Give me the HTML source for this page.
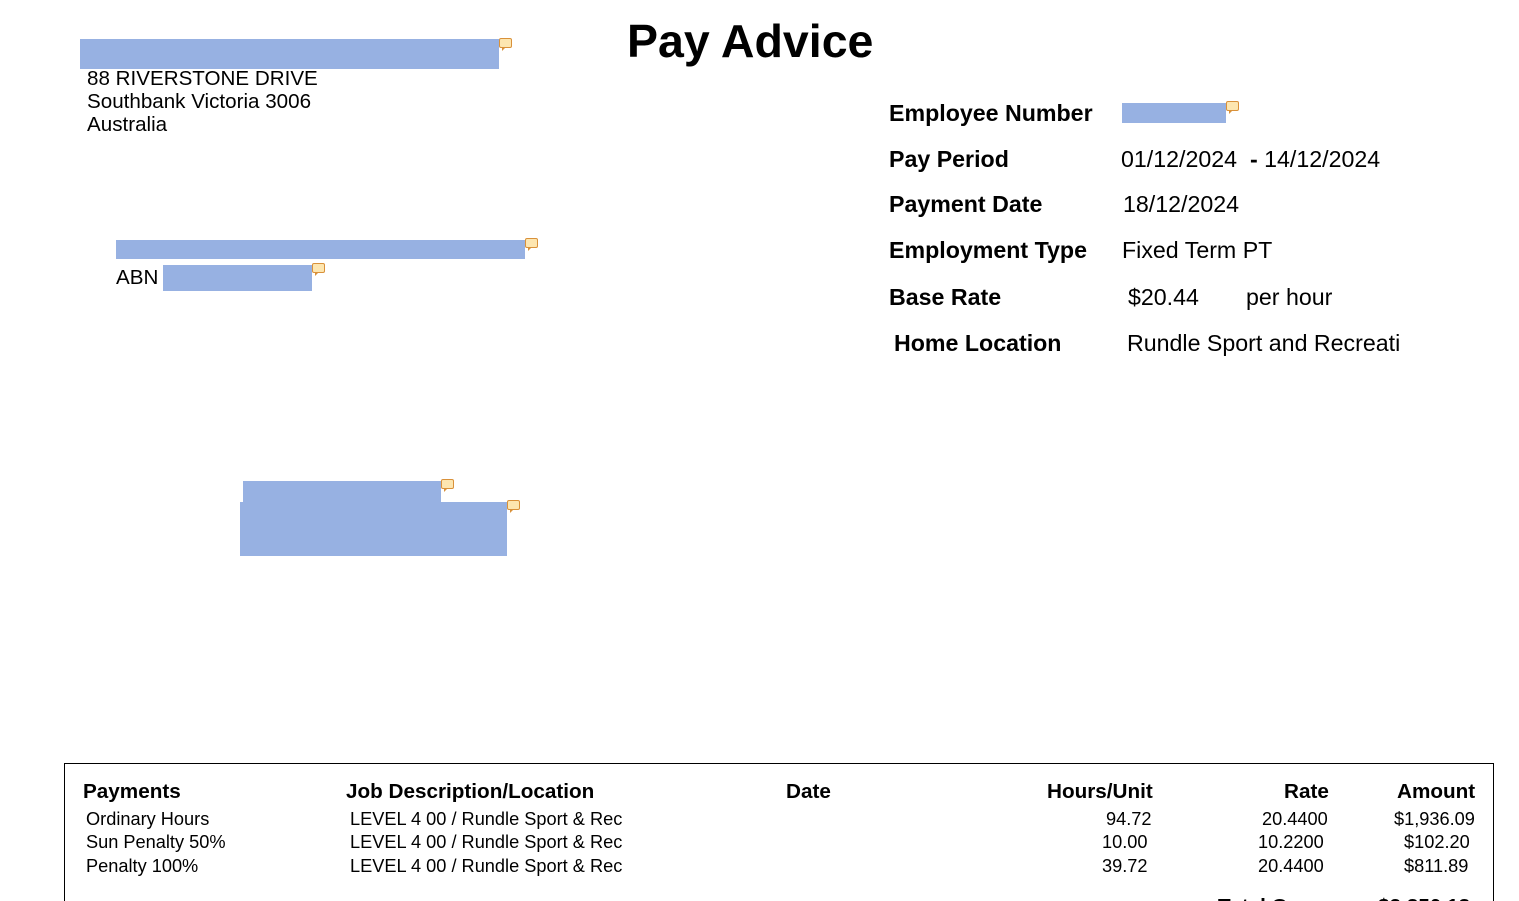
<!DOCTYPE html>
<html><head><meta charset="utf-8"><style>
html,body{margin:0;width:1519px;height:901px;overflow:hidden}
body{background:#fff;font-family:"Liberation Sans",Arial,sans-serif;color:#000;position:relative}
.a{position:absolute;white-space:nowrap}
.r{position:absolute;background:#97b1e2}
.n{position:absolute;width:11px;height:8px;background:#fde6b0;border:1px solid #d9913a;border-radius:2px}
.n:after{content:"";position:absolute;left:2px;bottom:-4px;border-left:3px solid #d9913a;border-bottom:3px solid transparent}
.lb{font-weight:bold;font-size:23.2px}
.v{font-size:23.2px}
.ad{font-size:20.6px}
.th{font-weight:bold;font-size:20.7px}
.td{font-size:18.2px}
</style></head><body>
<div class="a" style="left:627px;top:14px;font-size:46.5px;font-weight:bold">Pay Advice</div>

<div class="r" style="left:80px;top:39px;width:419px;height:30px"></div><div class="n" style="left:499px;top:38px"></div>
<div class="a ad" style="left:87px;top:67px">88 RIVERSTONE DRIVE</div>
<div class="a ad" style="left:87px;top:90px">Southbank Victoria 3006</div>
<div class="a ad" style="left:87px;top:113px">Australia</div>

<div class="r" style="left:116px;top:240px;width:409px;height:19px"></div><div class="n" style="left:525px;top:238px"></div>
<div class="a ad" style="left:116px;top:266px">ABN</div>
<div class="r" style="left:163px;top:265px;width:149px;height:26px"></div><div class="n" style="left:312px;top:263px"></div>

<div class="r" style="left:243px;top:481px;width:198px;height:22px"></div><div class="n" style="left:441px;top:479px"></div>
<div class="r" style="left:240px;top:502px;width:267px;height:54px"></div><div class="n" style="left:507px;top:500px"></div>

<div class="a lb" style="left:889px;top:100px">Employee Number</div>
<div class="r" style="left:1122px;top:103px;width:104px;height:20px"></div><div class="n" style="left:1226px;top:101px"></div>
<div class="a lb" style="left:889px;top:146px">Pay Period</div>
<div class="a v" style="left:1121px;top:146px">01/12/2024 &nbsp;<b>-</b> 14/12/2024</div>
<div class="a lb" style="left:889px;top:191px">Payment Date</div>
<div class="a v" style="left:1123px;top:191px">18/12/2024</div>
<div class="a lb" style="left:889px;top:237px">Employment Type</div>
<div class="a v" style="left:1122px;top:237px">Fixed Term PT</div>
<div class="a lb" style="left:889px;top:284px">Base Rate</div>
<div class="a v" style="left:1128px;top:284px">$20.44</div>
<div class="a v" style="left:1246px;top:284px">per hour</div>
<div class="a lb" style="left:894px;top:330px">Home Location</div>
<div class="a v" style="left:1127px;top:330px">Rundle Sport and Recreati</div>

<div style="position:absolute;left:64px;top:763px;width:1428px;height:160px;border:1px solid #000"></div>
<div class="a th" style="left:83px;top:780px">Payments</div>
<div class="a th" style="left:346px;top:780px">Job Description/Location</div>
<div class="a th" style="left:786px;top:780px">Date</div>
<div class="a th" style="left:1047px;top:780px">Hours/Unit</div>
<div class="a th" style="left:1284px;top:780px">Rate</div>
<div class="a th" style="left:1397px;top:780px">Amount</div>

<div class="a td" style="left:86px;top:809px">Ordinary Hours</div>
<div class="a td" style="left:86px;top:832px">Sun Penalty 50%</div>
<div class="a td" style="left:86px;top:856px">Penalty 100%</div>
<div class="a td" style="left:350px;top:809px">LEVEL 4 00 / Rundle Sport &amp; Rec</div>
<div class="a td" style="left:350px;top:832px">LEVEL 4 00 / Rundle Sport &amp; Rec</div>
<div class="a td" style="left:350px;top:856px">LEVEL 4 00 / Rundle Sport &amp; Rec</div>
<div class="a td" style="left:1106px;top:809px">94.72</div>
<div class="a td" style="left:1102px;top:832px">10.00</div>
<div class="a td" style="left:1102px;top:856px">39.72</div>
<div class="a td" style="left:1262px;top:809px">20.4400</div>
<div class="a td" style="left:1258px;top:832px">10.2200</div>
<div class="a td" style="left:1258px;top:856px">20.4400</div>
<div class="a td" style="left:1394px;top:809px">$1,936.09</div>
<div class="a td" style="left:1404px;top:832px">$102.20</div>
<div class="a td" style="left:1404px;top:856px">$811.89</div>
<div class="a th" style="left:1218px;top:895px">Total Gross</div>
<div class="a th" style="left:1378px;top:895px">$2,850.18</div>
</body></html>
